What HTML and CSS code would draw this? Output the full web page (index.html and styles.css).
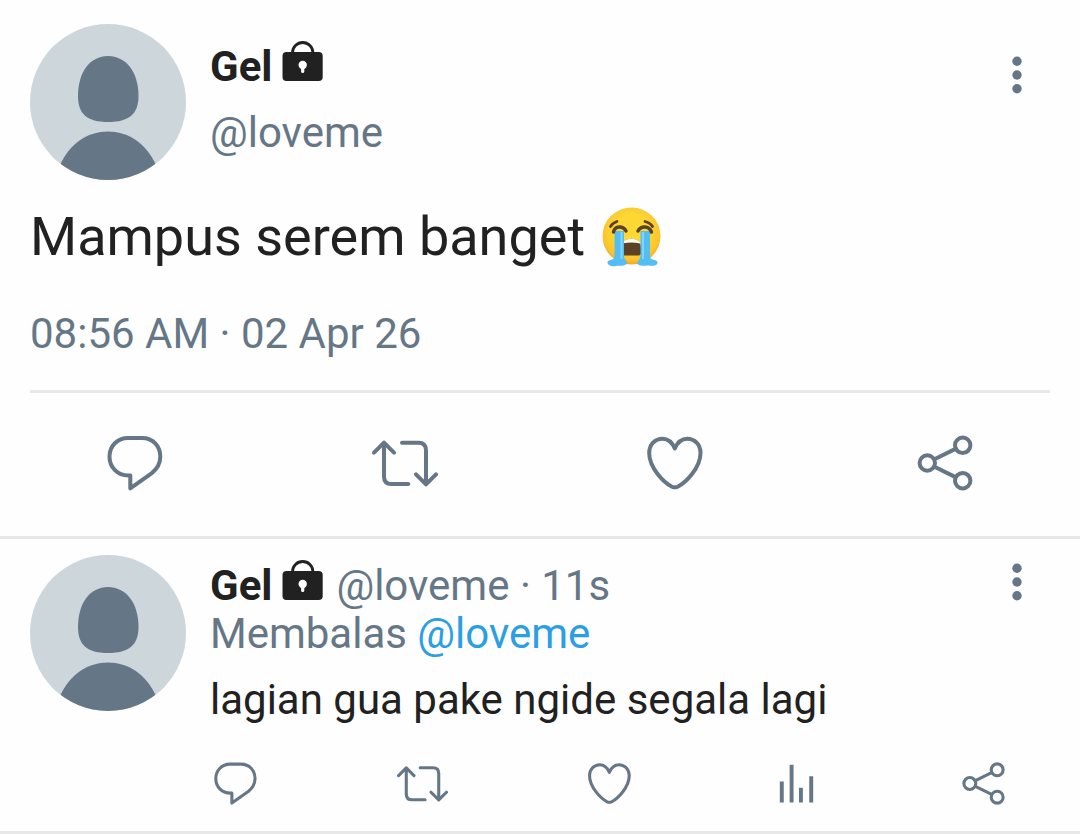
FILE: index.html
```html
<!DOCTYPE html>
<html lang="id">
<head>
  <meta charset="UTF-8" />
  <meta name="viewport" content="width=device-width, initial-scale=1.0"/>
  <title>Tweet</title>
  <link rel="stylesheet" href="styles.css">
</head>
<body>

  <!-- shared icons -->
  <svg class="sprite" aria-hidden="true">
    <symbol id="avatar" viewBox="0 0 156 156">
      <path d="M78 32C96 32 108.500 48 108.500 72C108.500 90 99 98 78 98S48 90 48 72C48 48 60 32 78 32Z"/>
      <path d="M30 141C40 119 58 107.500 78 107.500S116 119 126 141V156H30Z"/>
    </symbol>
    <symbol id="lock" viewBox="0 0 42 42">
      <path d="M10.500 14V12.500A10.200 10 0 0 1 30.900 12.500V14" fill="none" stroke="currentColor" stroke-width="2.800"/>
      <rect x="0.500" y="12" width="40.200" height="29" rx="4"/>
      <circle cx="20.700" cy="25" r="4.200" fill="#fff"/>
      <path d="M20.700 26V31.500" stroke="#fff" stroke-width="3.200" stroke-linecap="round"/>
    </symbol>
    <symbol id="more" viewBox="0 0 24 48">
      <circle cx="12" cy="10.300" r="4.700"/>
      <circle cx="12" cy="24" r="4.700"/>
      <circle cx="12" cy="37.700" r="4.700"/>
    </symbol>
    <symbol id="reply" viewBox="3 3 66 66">
      <path d="M31.300 61.300V48.500H29.500C18 48.500 10.500 40 10.500 29.500S18.500 10.900 29 10.900H43C54 10.900 61.300 19 61.300 29.500C61.300 36.500 58 42 52.500 46.300Z"/>
    </symbol>
    <symbol id="retweet" viewBox="3 3 66 66">
      <path d="M5 25.700L15 15.700L25 25.700M15 15.700V49.500Q15 57 22.500 57H39.300"/>
      <path d="M47 47.300L57 57.300L67 47.300M57 57.300V23.200Q57 15.700 49.500 15.700H33"/>
    </symbol>
    <symbol id="heart" viewBox="3 3 66 66">
      <path d="M35.800 21.500C33 15 28.500 11.700 23.500 11.700C16 11.700 10.200 17.500 10.200 26C10.200 41 25 55.500 33 59.700Q35.800 61 38.600 59.700C46.600 55.500 61.500 41 61.500 26C61.500 17.500 55.600 11.700 48.200 11.700C43.200 11.700 38.600 15 35.800 21.500Z"/>
    </symbol>
    <symbol id="stats" viewBox="0 0 52 52">
      <path d="M11 24V45.300M21 7V45.300M30.500 30.300V45.300M41 18.700V45.300" stroke-linecap="butt"/>
    </symbol>
    <symbol id="share" viewBox="3 3 66 66">
      <circle cx="18.300" cy="36" r="7.700"/>
      <circle cx="53.700" cy="18.300" r="7.700"/>
      <circle cx="53.700" cy="53.700" r="7.700"/>
      <path d="M25.500 32.300L46.500 21.900M25.500 39.700L46.500 50.100"/>
    </symbol>
  </svg>

  <main>
    <article class="tweet">
      <header class="tweet-header">
        <svg class="avatar"><use href="#avatar"/></svg>
        <div class="user">
          <div class="name-row">
            <span class="name">Gel</span>
            <svg class="lock"><use href="#lock"/></svg>
          </div>
          <div class="handle">@loveme</div>
        </div>
        <button class="more-btn" aria-label="More"><svg><use href="#more"/></svg></button>
      </header>

      <p class="tweet-text">
        <span>Mampus serem banget</span>
        <svg class="emoji" viewBox="0 0 60 60" role="img" aria-label="Crying face">
          <defs>
            <radialGradient id="face" cx="50%" cy="42%" r="58%">
              <stop offset="0.500" stop-color="#fdd835"/>
              <stop offset="0.850" stop-color="#fbc52d"/>
              <stop offset="1" stop-color="#f2a52a"/>
            </radialGradient>
          </defs>
          <ellipse cx="30.500" cy="29" rx="29" ry="28.500" fill="url(#face)"/>
          <path d="M21 41C21 28.500 40 28.500 40 41V46Q40 48.500 37 48.500H24Q21 48.500 21 46Z" fill="#5d4124"/>
          <path d="M21.500 36.500C24 30 37 30 39.500 36.500Q30.500 34.500 21.500 36.500Z" fill="#fff"/>
          <path d="M13.500 24H23V49C23 53 27 54 26 56.500C23 60 18 58 15 59C11 60 6 58 6.500 55C8 52 13.500 54 13.500 49Z" fill="#54bdf2"/>
          <path d="M39.500 24H49V49C49 54 55 52 56.500 55C57 59 51 59 48 58.500C44 58 39 60 36.500 57C35.500 54 39.500 53 39.500 49Z" fill="#54bdf2"/>
          <path d="M20.500 25V52M42 25V52" fill="none" stroke="#83d3fa" stroke-width="2"/>
          <path d="M12.500 25C14 18.500 22 18.500 25 24M37 24C40 18.500 48 18.500 50.500 25" fill="none" stroke="#5d4124" stroke-width="3.500" stroke-linecap="round"/>
          <path d="M9.500 19.500Q11.500 16 16 14.500M44 14.500Q49.500 16 51.500 19.500" fill="none" stroke="#5d4124" stroke-width="2.800" stroke-linecap="round"/>
        </svg>
      </p>
      <time class="tweet-time" datetime="2026-04-02T08:56">08:56 AM · 02 Apr 26</time>

      <div class="actions">
        <button aria-label="Reply"><svg><use href="#reply"/></svg></button>
        <button aria-label="Retweet"><svg><use href="#retweet"/></svg></button>
        <button aria-label="Like"><svg><use href="#heart"/></svg></button>
        <button aria-label="Share"><svg><use href="#share"/></svg></button>
      </div>
    </article>

    <article class="comment">
      <svg class="avatar"><use href="#avatar"/></svg>
      <div class="comment-body">
        <div class="name-row">
          <span class="name">Gel</span>
          <svg class="lock"><use href="#lock"/></svg>
          <span class="meta">@loveme · 11s</span>
        </div>
        <div class="replying">Membalas <a href="#">@loveme</a></div>
        <p class="comment-text">lagian gua pake ngide segala lagi</p>
        <div class="comment-actions">
          <button aria-label="Reply"><svg><use href="#reply"/></svg></button>
          <button aria-label="Retweet"><svg><use href="#retweet"/></svg></button>
          <button aria-label="Like"><svg><use href="#heart"/></svg></button>
          <button aria-label="Stats"><svg><use href="#stats"/></svg></button>
          <button aria-label="Share"><svg><use href="#share"/></svg></button>
        </div>
      </div>
      <button class="more-btn" aria-label="More"><svg><use href="#more"/></svg></button>
    </article>
  </main>

</body>
</html>
```
FILE: styles.css
```css
* {
  margin: 0;
  padding: 0;
  box-sizing: border-box;
}

body {
  font-family: Roboto, sans-serif;
  font-size: 42px;
  line-height: 48px;
  color: #657786;
  background: #fefefe;
}

svg {
  display: block;
  fill: currentColor;
}

button {
  border: none;
  background: none;
  color: inherit;
  cursor: pointer;
}

a {
  color: #2b9fe3;
  text-decoration: none;
}

.sprite {
  display: none;
}

.avatar {
  flex: none;
  width: 156px;
  height: 156px;
  border-radius: 50%;
  background: #ccd6db;
}

.tweet {
  padding-top: 24px;
  border-bottom: 3px solid #e8e8e8;
}

.tweet-header {
  display: flex;
  gap: 24px;
  padding: 0 51px 0 30px;
}

.user {
  flex: 1;
  padding-top: 19px;
}

.handle {
  margin-top: 18px;
}

.name-row {
  display: flex;
  align-items: center;
  height: 48px;
}

.name {
  font-weight: 700;
  color: #212121;
}

.lock {
  width: 42px;
  height: 42px;
  margin: 0 12px 12px 10px;
  color: #212121;
}

.more-btn {
  flex: none;
  align-self: flex-start;
  margin-top: 27px;
}

.more-btn svg {
  width: 24px;
  height: 48px;
}

.tweet-text {
  display: flex;
  align-items: center;
  gap: 16px;
  margin: 25px 30px 0;
  font-size: 54px;
  line-height: 64px;
  color: #212121;
}

.emoji {
  width: 60px;
  height: 60px;
}

.tweet-time {
  display: block;
  margin: 41px 30px 0;
  padding-bottom: 32px;
  border-bottom: 3px solid #e8e8e8;
}

.actions {
  display: grid;
  grid-template-columns: repeat(4, 1fr);
  padding: 37px 0 40px;
}

.actions button {
  display: flex;
  justify-content: center;
}

.actions svg,
.comment-actions svg {
  width: 66px;
  height: 66px;
  fill: none;
  stroke: currentColor;
  stroke-width: 4px;
  stroke-linecap: round;
  stroke-linejoin: round;
}

.comment {
  display: flex;
  gap: 24px;
  padding: 16px 51px 22px 30px;
  border-bottom: 3px solid #e8e8e8;
}

.comment-body {
  flex: 1;
  padding-top: 7px;
}

.comment-text {
  margin-top: 18px;
  color: #212121;
}

.comment-actions {
  display: flex;
  justify-content: space-between;
  margin-top: 34px;
  margin-right: -28px;
}

.comment-actions svg {
  width: 51px;
  height: 51px;
}

.comment .more-btn {
  margin-top: 3px;
}
```
